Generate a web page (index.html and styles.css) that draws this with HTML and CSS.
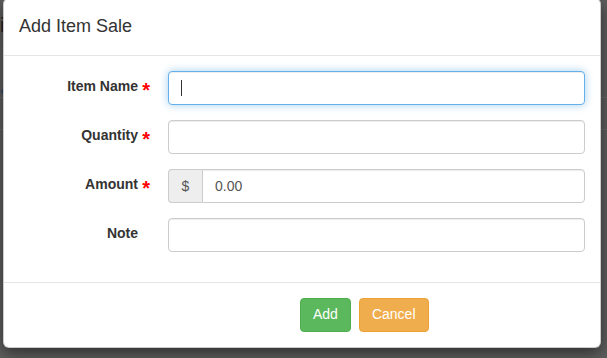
FILE: index.html
```html
<!DOCTYPE html>
<html>
<head>
  <title>Add Item Sale</title>
  <link rel="stylesheet" href="styles.css">
</head>
<body>
  <div class="page-behind">
    <span class="bg-letter">i</span>
    <span class="bg-arrow">&lsaquo;</span>
    <div class="bg-line line-a"></div>
    <div class="bg-line line-b"></div>
  </div>

  <div class="modal">
    <div class="modal-header">
      <h4 class="modal-title">Add Item Sale</h4>
    </div>

    <form class="modal-body">
      <div class="form-group">
        <label class="control-label required" for="item-name">Item Name</label>
        <div class="field">
          <input type="text" id="item-name" class="form-control focused">
          <span class="caret-mark"></span>
        </div>
      </div>
      <div class="form-group">
        <label class="control-label required" for="quantity">Quantity</label>
        <div class="field">
          <input type="text" id="quantity" class="form-control">
        </div>
      </div>
      <div class="form-group">
        <label class="control-label required" for="amount">Amount</label>
        <div class="field input-group">
          <span class="input-group-addon">$</span>
          <input type="text" id="amount" class="form-control" value="0.00">
        </div>
      </div>
      <div class="form-group">
        <label class="control-label" for="note">Note</label>
        <div class="field">
          <input type="text" id="note" class="form-control">
        </div>
      </div>
    </form>

    <div class="modal-footer">
      <button type="button" class="btn btn-success">Add</button>
      <button type="button" class="btn btn-warning">Cancel</button>
    </div>
  </div>
</body>
</html>
```

FILE: styles.css
```css
* {
  box-sizing: border-box;
}

body {
  margin: 0;
  height: 358px;
  overflow: hidden;
  background-color: #5e5e5e;
  font-family: "Liberation Sans", Arial, sans-serif;
  font-size: 14px;
  color: #333;
  position: relative;
}

/* page dimmed behind the modal */
.page-behind {
  position: absolute;
  inset: 0;
}

.bg-letter {
  position: absolute;
  left: 0;
  top: 14px;
  font-size: 20px;
  color: #222;
}

.bg-arrow {
  position: absolute;
  left: 0;
  top: 80px;
  font-size: 18px;
  color: #2f4a66;
}

.bg-line {
  position: absolute;
  left: 0;
  right: 0;
  height: 1px;
  background-color: #6a6a6a;
}

.line-a {
  top: 97px;
}

.line-b {
  top: 129px;
}

.modal {
  position: relative;
  width: 598px;
  margin-left: 3px;
  margin-top: -2px;
  background-color: #fff;
  border: 1px solid rgba(0, 0, 0, 0.2);
  border-radius: 6px;
  box-shadow: 0 5px 15px rgba(0, 0, 0, 0.5);
}

.modal-header {
  padding: 15px;
  border-bottom: 1px solid #e5e5e5;
}

.modal-title {
  margin: 0;
  font-size: 18px;
  font-weight: 500;
  line-height: 1.42857;
}

.modal-body {
  padding: 15px;
  margin: 0;
}

.form-group {
  display: flex;
  margin: 0 -15px 15px;
}

.control-label {
  width: 25%;
  padding: 7px 15px 0;
  text-align: right;
  font-weight: bold;
  position: relative;
}

.required::after {
  content: "*";
  position: absolute;
  right: 3px;
  top: 8px;
  color: red;
  font-size: 20px;
}

.field {
  width: 75%;
  padding: 0 15px;
  position: relative;
}

.form-control {
  display: block;
  width: 100%;
  height: 34px;
  padding: 6px 12px;
  font-family: inherit;
  font-size: 14px;
  color: #555;
  background-color: #fff;
  border: 1px solid #ccc;
  border-radius: 4px;
  box-shadow: inset 0 1px 1px rgba(0, 0, 0, 0.075);
  outline: none;
}

.form-control.focused {
  border-color: #66afe9;
  box-shadow: inset 0 1px 1px rgba(0, 0, 0, 0.075), 0 0 8px rgba(102, 175, 233, 0.6);
}

.caret-mark {
  position: absolute;
  left: 28px;
  top: 9px;
  width: 1px;
  height: 16px;
  background-color: #333;
}

.input-group {
  display: flex;
}

.input-group-addon {
  width: 34px;
  flex: none;
  padding: 6px 0;
  text-align: center;
  color: #555;
  background-color: #eee;
  border: 1px solid #ccc;
  border-right: 0;
  border-radius: 4px 0 0 4px;
  line-height: 20px;
}

.input-group .form-control {
  border-radius: 0 4px 4px 0;
}

.modal-footer {
  padding: 15px 15px 15px 296px;
  border-top: 1px solid #e5e5e5;
  display: flex;
  gap: 8px;
}

.btn {
  padding: 6px 12px;
  font-family: inherit;
  font-size: 14px;
  line-height: 1.42857;
  color: #fff;
  border: 1px solid transparent;
  border-radius: 4px;
  cursor: pointer;
}

.btn-success {
  background-color: #5cb85c;
  border-color: #4cae4c;
}

.btn-warning {
  background-color: #f0ad4e;
  border-color: #eea236;
}
```
